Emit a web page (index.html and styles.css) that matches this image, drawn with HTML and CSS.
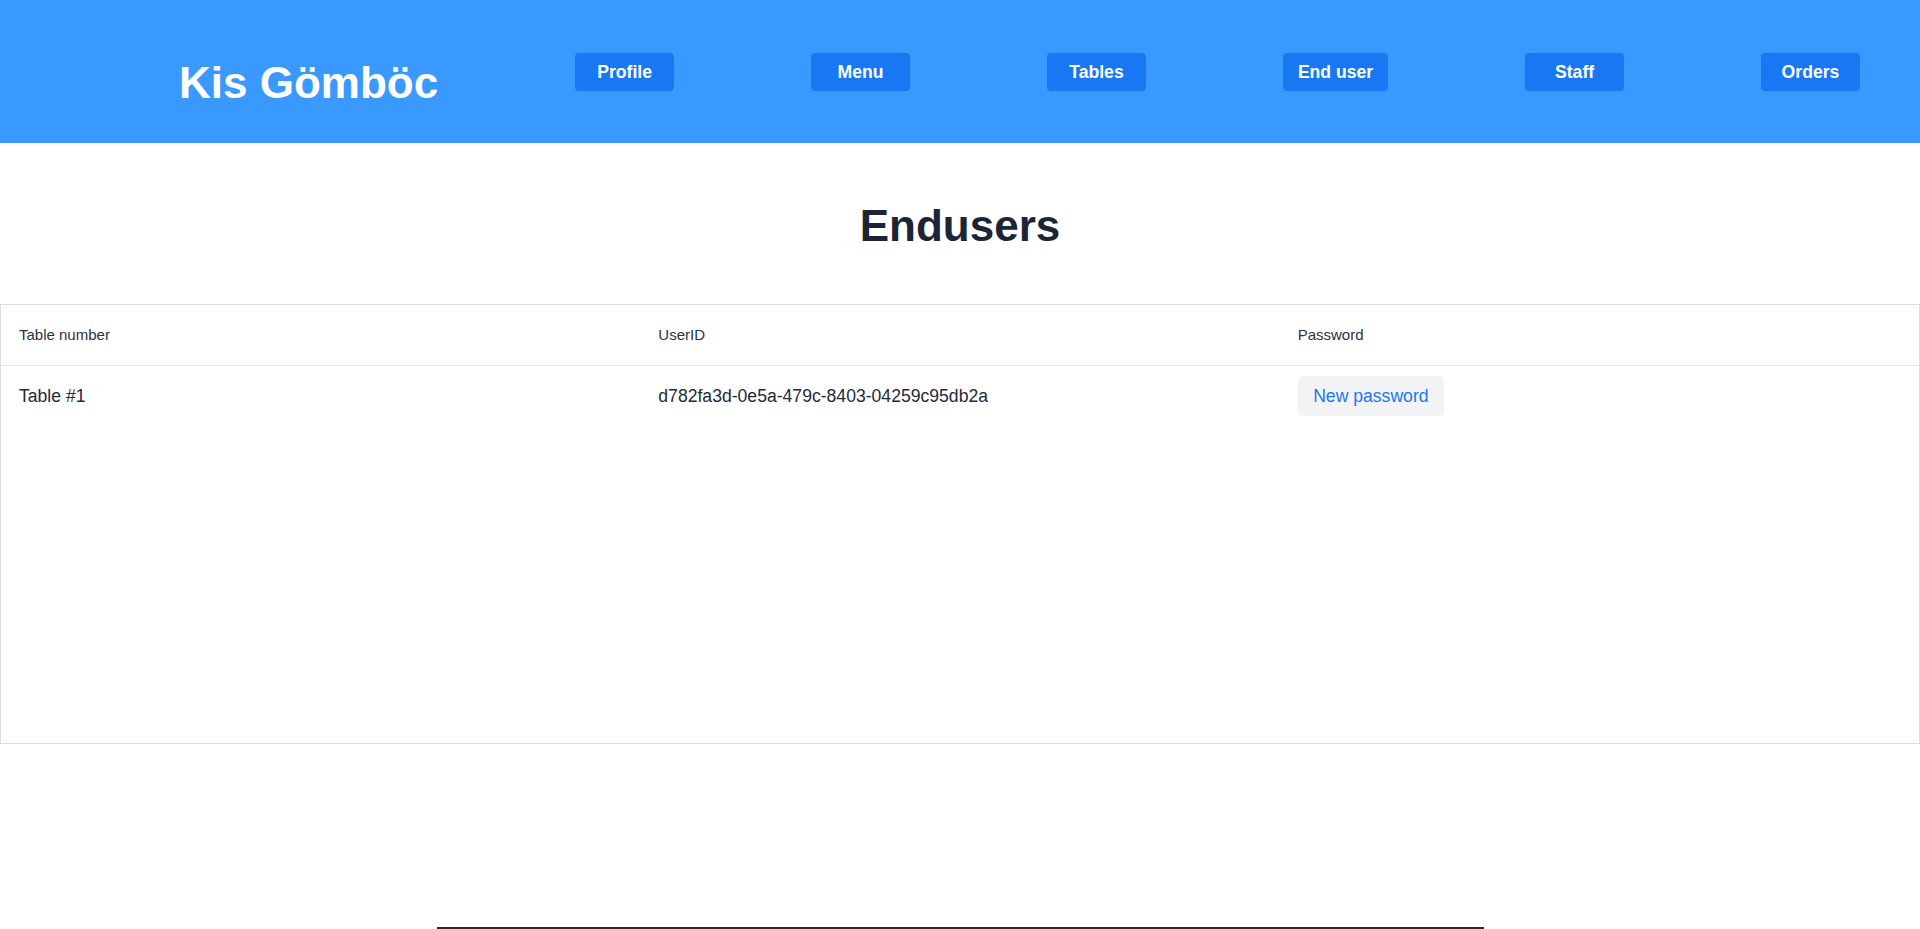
FILE: index.html
```html
<!DOCTYPE html>
<html lang="en">
<head>
<meta charset="utf-8">
<title>Endusers</title>
<link rel="stylesheet" href="styles.css">
</head>
<body>
<header class="topbar">
  <h1 class="brand">Kis Gömböc</h1>
  <nav class="nav">
    <button class="nav-btn">Profile</button>
    <button class="nav-btn">Menu</button>
    <button class="nav-btn">Tables</button>
    <button class="nav-btn">End user</button>
    <button class="nav-btn">Staff</button>
    <button class="nav-btn">Orders</button>
  </nav>
</header>
<main>
  <h2 class="page-title">Endusers</h2>
  <div class="table-wrap">
    <table class="users">
      <colgroup><col class="col"><col class="col"><col class="col"></colgroup>
      <thead>
        <tr><th>Table number</th><th>UserID</th><th>Password</th></tr>
      </thead>
      <tbody>
        <tr>
          <td>Table #1</td>
          <td>d782fa3d-0e5a-479c-8403-04259c95db2a</td>
          <td><button class="pw-btn">New password</button></td>
        </tr>
      </tbody>
    </table>
  </div>
</main>
<footer class="footer"></footer>
</body>
</html>
```
FILE: styles.css
```css
html, body {
  margin: 0;
  padding: 0;
  background: #ffffff;
}
body {
  font-family: "Liberation Sans", Arial, sans-serif;
  color: #252d3a;
}
.topbar {
  display: flex;
  align-items: center;
  gap: 137px;
  height: 143px;
  padding: 0 60px 0 179px;
  background: #3a99fe;
  box-sizing: border-box;
}
.brand {
  margin: 23px 0 0 0;
  font-size: 44px;
  font-weight: bold;
  color: #ffffff;
  line-height: normal;
  white-space: nowrap;
}
.nav {
  flex: 1;
  display: flex;
  justify-content: space-between;
  align-items: center;
}
.nav-btn {
  min-width: 99px;
  height: 38px;
  padding: 0 15px;
  box-sizing: border-box;
  border: none;
  border-radius: 4px;
  background: #1877f2;
  color: #ffffff;
  font-family: "Liberation Sans", Arial, sans-serif;
  font-size: 17.6px;
  font-weight: bold;
  line-height: 38px;
  white-space: nowrap;
}
.page-title {
  margin: 58px 0 53px;
  text-align: center;
  font-size: 44px;
  line-height: 50px;
  font-weight: bold;
  color: #1c2536;
}
.table-wrap {
  height: 440px;
  box-sizing: border-box;
  border: 1px solid #dddddd;
}
.users {
  width: 100%;
  table-layout: fixed;
  border-collapse: separate;
  border-spacing: 0;
}
.users th {
  text-align: left;
  font-weight: normal;
  font-size: 15px;
  line-height: 17px;
  color: #2b3240;
  padding: 21px 18px 22px;
  border-bottom: 1px solid #e4e6ea;
  vertical-align: middle;
}
.users td {
  font-size: 17.6px;
  line-height: 40px;
  padding: 9px 18px;
  vertical-align: middle;
  color: #232b38;
  white-space: nowrap;
}
.pw-btn {
  display: inline-block;
  height: 40px;
  padding: 0 15.5px;
  border: none;
  border-radius: 5px;
  background: #f2f3f5;
  color: #1a77f2;
  font-family: "Liberation Sans", Arial, sans-serif;
  font-size: 17.6px;
  line-height: 40px;
  vertical-align: middle;
}
.footer {
  width: 1047px;
  margin: 183px auto 0;
  border-top: 2px solid #2b2b2b;
  height: 20px;
}
```
